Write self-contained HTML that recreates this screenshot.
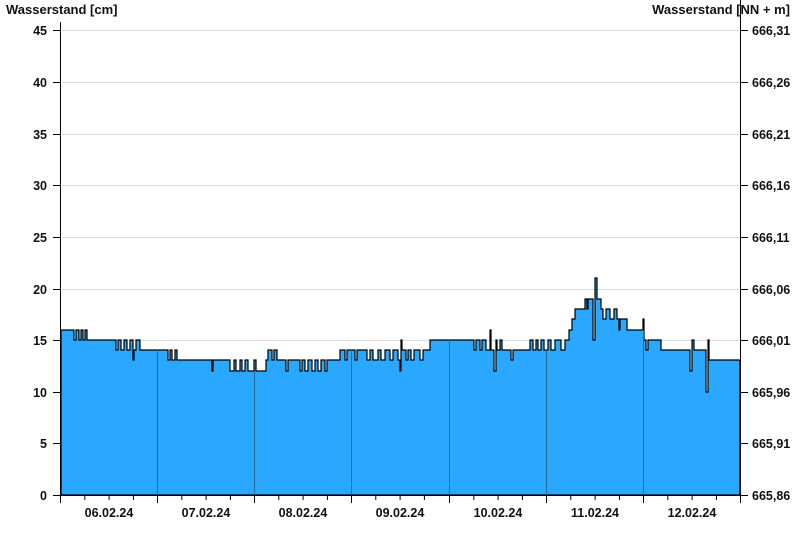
<!DOCTYPE html>
<html><head><meta charset="utf-8"><style>
html,body{margin:0;padding:0;background:#fff;width:800px;height:550px;overflow:hidden}
svg text{font-family:"Liberation Sans",Arial,sans-serif;font-weight:bold;font-size:12.5px;fill:#111}
svg text.t{font-size:13px}
</style></head><body>
<svg width="800" height="550" viewBox="0 0 800 550" xmlns="http://www.w3.org/2000/svg">
<text class="t" x="6" y="14">Wasserstand [cm]</text>
<text class="t" x="790" y="14" text-anchor="end">Wasserstand [NN + m]</text>
<g stroke="#dcdcdc" stroke-width="1">
<line x1="61" x2="740" y1="30.5" y2="30.5"/><line x1="61" x2="740" y1="82.5" y2="82.5"/>
<line x1="61" x2="740" y1="134.5" y2="134.5"/><line x1="61" x2="740" y1="185.5" y2="185.5"/>
<line x1="61" x2="740" y1="237.5" y2="237.5"/><line x1="61" x2="740" y1="289.5" y2="289.5"/>
<line x1="61" x2="740" y1="340.5" y2="340.5"/><line x1="61" x2="740" y1="392.5" y2="392.5"/>
<line x1="61" x2="740" y1="443.5" y2="443.5"/>
</g>
<path fill="#2aa8ff" stroke="#000" stroke-width="1.2" d="M61,495 L61,330 H74 V340 H76 V330 H79 V340 H81 V330 H83 V340 H85 V330 H87 V340 H116 V350 H118 V340 H121 V350 H124 V340 H127 V350 H130 V340 H133 V360 H134 V350 H136 V340 H140 V350 H143 V350 H168 V360 H170 V350 H172 V360 H175 V350 H177 V360 H212 V371 H213 V360 H230 V371 H234 V360 H236 V371 H240 V360 H242 V371 H245 V360 H248 V371 H254 V360 H256 V371 H266 V360 H268 V350 H272 V360 H274 V350 H277 V360 H286 V371 H288 V360 H300 V371 H302 V360 H305 V371 H308 V360 H312 V371 H315 V360 H318 V371 H321 V360 H325 V371 H327 V360 H340 V350 H345 V360 H347 V350 H355 V360 H357 V350 H367 V360 H370 V350 H373 V360 H378 V350 H381 V360 H385 V350 H390 V360 H393 V350 H398 V360 H400 V371 H401 V340 H402 V350 H406 V360 H408 V350 H411 V360 H414 V350 H420 V360 H423 V350 H430 V340 H474 V350 H476 V340 H480 V350 H482 V340 H486 V350 H490 V330 H491 V350 H494 V371 H496 V340 H497 V350 H500 V340 H502 V350 H511 V360 H513 V350 H530 V340 H533 V350 H536 V340 H538 V350 H541 V340 H544 V350 H548 V340 H551 V350 H555 V340 H561 V350 H565 V340 H569 V330 H572 V319 H575 V309 H580 V309 H585 V299 H587 V309 H588 V299 H593 V340 H595 V278 H597 V299 H601 V309 H603 V319 H606 V309 H610 V319 H614 V309 H617 V319 H619 V330 H620 V319 H627 V330 H643 V319 H644 V340 H646 V350 H648 V340 H661 V350 H690 V371 H692 V340 H694 V350 H706 V392 H708 V340 H709 V360 H740 V495 Z"/>
<g stroke="#2a6a90" stroke-width="1">
<line x1="157.5" x2="157.5" y1="350" y2="495"/><line x1="254.5" x2="254.5" y1="371" y2="495"/>
<line x1="351.5" x2="351.5" y1="350" y2="495"/><line x1="449.5" x2="449.5" y1="340" y2="495"/>
<line x1="546.5" x2="546.5" y1="350" y2="495"/><line x1="643.5" x2="643.5" y1="330" y2="495"/>
</g>
<g stroke="#000" stroke-width="1">
<line x1="60.5" x2="60.5" y1="22" y2="496"/>
<line x1="740.5" x2="740.5" y1="0" y2="496"/>
<line x1="60" x2="741" y1="495.5" y2="495.5"/>
<path d="M53,30.5H60M53,82.5H60M53,134.5H60M53,185.5H60M53,237.5H60M53,289.5H60M53,340.5H60M53,392.5H60M53,443.5H60M53,495.5H60"/>
<path d="M741,30.5H748M741,82.5H748M741,134.5H748M741,185.5H748M741,237.5H748M741,289.5H748M741,340.5H748M741,392.5H748M741,443.5H748M741,495.5H748"/>
<path d="M60.5,495V503M84.8,495V500M109.1,495V500M133.4,495V500M157.5,495V503M181.8,495V500M206.1,495V500M230.4,495V500M254.5,495V503M278.8,495V500M303.1,495V500M327.4,495V500M351.5,495V503M375.8,495V500M400.1,495V500M424.4,495V500M449.5,495V503M473.8,495V500M498.1,495V500M522.4,495V500M546.5,495V503M570.8,495V500M595.1,495V500M619.4,495V500M643.5,495V503M667.8,495V500M692.1,495V500M716.4,495V500M740.5,495V503"/>
</g>
<g text-anchor="end">
<text x="47" y="35">45</text><text x="47" y="87">40</text><text x="47" y="139">35</text>
<text x="47" y="190">30</text><text x="47" y="242">25</text><text x="47" y="294">20</text>
<text x="47" y="345">15</text><text x="47" y="397">10</text><text x="47" y="448">5</text><text x="47" y="500">0</text>
</g>
<g>
<text x="752" y="35">666,31</text><text x="752" y="87">666,26</text><text x="752" y="139">666,21</text>
<text x="752" y="190">666,16</text><text x="752" y="242">666,11</text><text x="752" y="294">666,06</text>
<text x="752" y="345">666,01</text><text x="752" y="397">665,96</text><text x="752" y="448">665,91</text><text x="752" y="500">665,86</text>
</g>
<g text-anchor="middle">
<text x="109" y="517">06.02.24</text><text x="206" y="517">07.02.24</text><text x="303" y="517">08.02.24</text>
<text x="400" y="517">09.02.24</text><text x="498" y="517">10.02.24</text><text x="595" y="517">11.02.24</text>
<text x="692" y="517">12.02.24</text>
</g>
</svg>
</body></html>
